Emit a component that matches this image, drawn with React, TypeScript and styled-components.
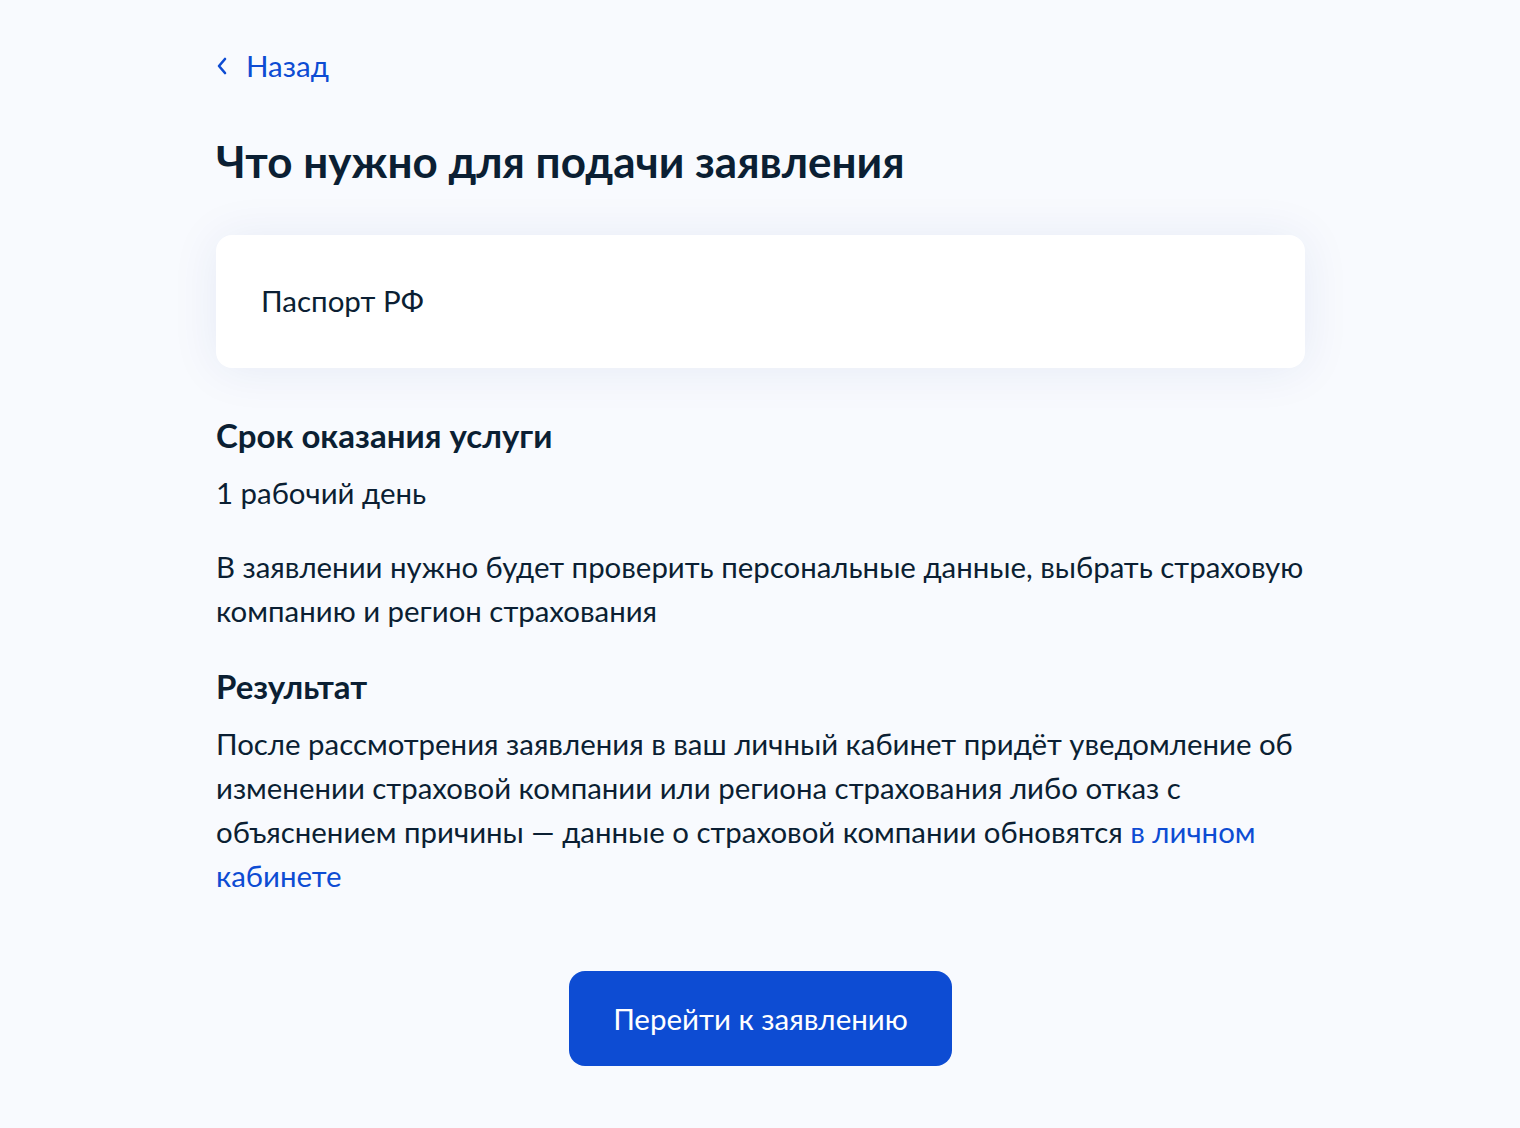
import styled, { createGlobalStyle } from "styled-components";

const GlobalStyle = createGlobalStyle`
  html, body {
    margin: 0;
    padding: 0;
    background: #f8fafe;
  }
  body {
    font-family: Lato, "Noto Sans", sans-serif;
    color: #0b1f33;
  }
  * {
    box-sizing: border-box;
  }
`;

const Page = styled.div`
  width: 1520px;
  min-height: 1128px;
  padding: 46px 215px 0 216px;
`;

const BackLink = styled.a`
  display: inline-flex;
  align-items: center;
  gap: 18px;
  color: #0d4cd3;
  font-size: 29.5px;
  line-height: 40px;
  text-decoration: none;
  cursor: pointer;
`;

const Title = styled.h1`
  margin: 49px 0 0;
  font-size: 44px;
  line-height: 52px;
  font-weight: 700;
`;

const Card = styled.div`
  margin-top: 48px;
  background: #fff;
  border-radius: 16px;
  padding: 44px 45px 45px;
  font-size: 29.5px;
  line-height: 44px;
  box-shadow: 0 2px 48px rgba(30, 55, 140, 0.08);
`;

const SectionTitle = styled.h2<{ $top: number }>`
  margin: ${(p) => p.$top}px 0 0;
  font-size: 33px;
  line-height: 44px;
  font-weight: 700;
`;

const Text = styled.p<{ $top: number }>`
  margin: ${(p) => p.$top}px -4px 0 0;
  font-size: 29.4px;
  line-height: 44px;
`;

const Link = styled.a`
  color: #0d4cd3;
  text-decoration: none;
  cursor: pointer;
`;

const ButtonRow = styled.div`
  display: flex;
  justify-content: center;
  margin-top: 73px;
`;

const Button = styled.button`
  width: 383px;
  height: 95px;
  border: none;
  border-radius: 16px;
  background: #0d4cd3;
  color: #fff;
  font-family: Lato, "Noto Sans", sans-serif;
  font-size: 29.5px;
  cursor: pointer;
`;

const Chevron = () => (
  <svg width="12" height="20" viewBox="0 0 12 20" fill="none">
    <path
      d="M9 3L3 10l6 7"
      stroke="#0d4cd3"
      strokeWidth="2.6"
      strokeLinecap="round"
      strokeLinejoin="round"
    />
  </svg>
);

export default function App() {
  return (
    <>
      <GlobalStyle />
      <Page>
        <BackLink>
          <Chevron />
          Назад
        </BackLink>
        <Title>Что нужно для подачи заявления</Title>
        <Card>Паспорт РФ</Card>
        <SectionTitle $top={45}>Срок оказания услуги</SectionTitle>
        <Text $top={14}>1 рабочий день</Text>
        <Text $top={30}>
          В заявлении нужно будет проверить персональные данные, выбрать
          страховую компанию и регион страхования
        </Text>
        <SectionTitle $top={31}>Результат</SectionTitle>
        <Text $top={14}>
          После рассмотрения заявления в ваш личный кабинет придёт уведомление
          об изменении страховой компании или региона страхования либо отказ с
          объяснением причины — данные о страховой компании обновятся{" "}
          <Link>в личном кабинете</Link>
        </Text>
        <ButtonRow>
          <Button>Перейти к заявлению</Button>
        </ButtonRow>
      </Page>
    </>
  );
}
